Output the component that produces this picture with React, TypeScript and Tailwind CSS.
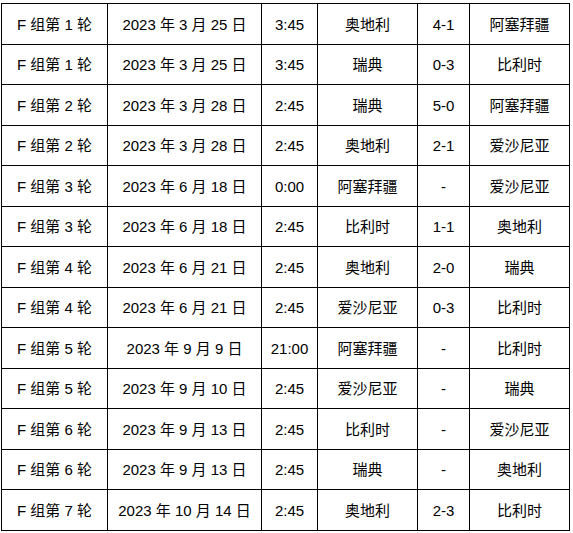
const rows: string[][] = [
  ['F 组第 1 轮', '2023 年 3 月 25 日', '3:45', '奥地利', '4-1', '阿塞拜疆'],
  ['F 组第 1 轮', '2023 年 3 月 25 日', '3:45', '瑞典', '0-3', '比利时'],
  ['F 组第 2 轮', '2023 年 3 月 28 日', '2:45', '瑞典', '5-0', '阿塞拜疆'],
  ['F 组第 2 轮', '2023 年 3 月 28 日', '2:45', '奥地利', '2-1', '爱沙尼亚'],
  ['F 组第 3 轮', '2023 年 6 月 18 日', '0:00', '阿塞拜疆', '-', '爱沙尼亚'],
  ['F 组第 3 轮', '2023 年 6 月 18 日', '2:45', '比利时', '1-1', '奥地利'],
  ['F 组第 4 轮', '2023 年 6 月 21 日', '2:45', '奥地利', '2-0', '瑞典'],
  ['F 组第 4 轮', '2023 年 6 月 21 日', '2:45', '爱沙尼亚', '0-3', '比利时'],
  ['F 组第 5 轮', '2023 年 9 月 9 日', '21:00', '阿塞拜疆', '-', '比利时'],
  ['F 组第 5 轮', '2023 年 9 月 10 日', '2:45', '爱沙尼亚', '-', '瑞典'],
  ['F 组第 6 轮', '2023 年 9 月 13 日', '2:45', '比利时', '-', '爱沙尼亚'],
  ['F 组第 6 轮', '2023 年 9 月 13 日', '2:45', '瑞典', '-', '奥地利'],
  ['F 组第 7 轮', '2023 年 10 月 14 日', '2:45', '奥地利', '2-3', '比利时'],
]

// widths between the vertical rules
const colWidths = ['w-[106px]', 'w-[154px]', 'w-[56px]', 'w-[100px]', 'w-[52px]', 'w-[101px] border-r']

export default function App() {
  return (
    <div
      className="w-[573px] h-[533px] bg-white pt-[3px] pl-[1px] text-black text-[15px]"
      style={{ fontFamily: '"Liberation Sans", "Noto Sans CJK SC", sans-serif' }}
    >
      <div className="flex flex-col w-fit">
        {rows.map((row, i) => {
          const last = i === rows.length - 1
          const h = last ? 'h-[42px] border-b' : i % 2 === 0 ? 'h-[41px]' : 'h-[40px]'
          return (
            <div key={i} className="flex">
              {row.map((cell, j) => (
                <div
                  key={j}
                  className={`${colWidths[j]} ${h} flex items-center justify-center border-l border-t border-black leading-none whitespace-nowrap`}
                >
                  {cell}
                </div>
              ))}
            </div>
          )
        })}
      </div>
    </div>
  )
}
